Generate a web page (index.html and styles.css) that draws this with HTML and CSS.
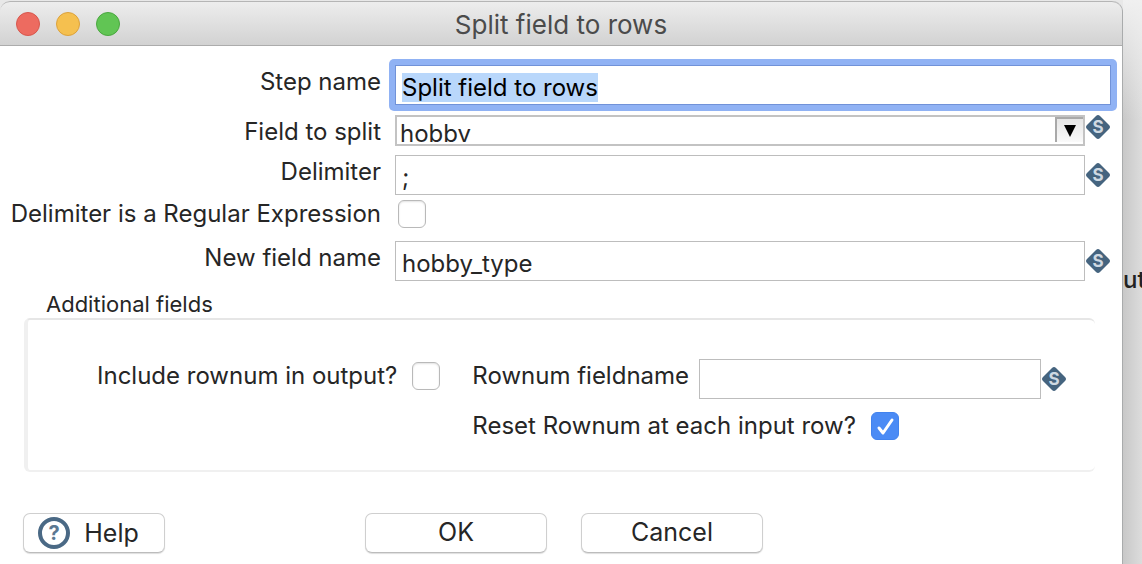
FILE: index.html
```html
<!DOCTYPE html>
<html lang="en">
<head>
<meta charset="utf-8">
<title>Split field to rows</title>
<link rel="stylesheet" href="styles.css">
</head>
<body>
<main class="window">
  <header class="titlebar">
    <div class="lights">
      <button type="button" class="light red" aria-label="Close"></button>
      <button type="button" class="light yellow" aria-label="Minimize"></button>
      <button type="button" class="light green" aria-label="Zoom"></button>
    </div>
    <h1 class="title">Split field to rows</h1>
  </header>
  <form class="form">
    <div class="row">
      <label class="label" for="step">Step name</label>
      <div class="field focused">
        <input class="text" id="step" type="text" value="Split field to rows">
      </div>
    </div>
    <div class="row combo-row">
      <label class="label" for="split">Field to split</label>
      <div class="field">
        <div class="combo">
          <div class="combo-value"><select id="split"><option>hobby</option></select></div>
          <span class="combo-arrow"><svg width="12" height="12" viewBox="0 0 12 12"><path d="M0 0H12L6 12Z"/></svg></span>
        </div>
        <svg class="variable" viewBox="0 0 24 24" aria-hidden="true">
          <path d="M10 1Q12 -1 14 1L23 10Q25 12 23 14L14 23Q12 25 10 23L1 14Q-1 12 1 10Z" fill="#45647f"/>
          <text x="12" y="18" text-anchor="middle" class="glyph-s">S</text>
        </svg>
      </div>
    </div>
    <div class="row tight">
      <label class="label" for="delimiter">Delimiter</label>
      <div class="field">
        <input class="text" id="delimiter" type="text" value=";">
        <svg class="variable" viewBox="0 0 24 24" aria-hidden="true">
          <path d="M10 1Q12 -1 14 1L23 10Q25 12 23 14L14 23Q12 25 10 23L1 14Q-1 12 1 10Z" fill="#45647f"/>
          <text x="12" y="18" text-anchor="middle" class="glyph-s">S</text>
        </svg>
      </div>
    </div>
    <div class="row">
      <label class="label" for="regex">Delimiter is a Regular Expression</label>
      <div class="field check-field"><input class="check" id="regex" type="checkbox"></div>
    </div>
    <div class="row">
      <label class="label" for="newname">New field name</label>
      <div class="field">
        <input class="text" id="newname" type="text" value="hobby_type">
        <svg class="variable" viewBox="0 0 24 24" aria-hidden="true">
          <path d="M10 1Q12 -1 14 1L23 10Q25 12 23 14L14 23Q12 25 10 23L1 14Q-1 12 1 10Z" fill="#45647f"/>
          <text x="12" y="18" text-anchor="middle" class="glyph-s">S</text>
        </svg>
      </div>
    </div>
    <fieldset class="group">
      <legend class="legend">Additional fields</legend>
      <div class="panel">
        <div class="include">
          <label class="label" for="rownum">Include rownum in output?</label>
          <input class="check" id="rownum" type="checkbox">
        </div>
        <div class="options">
          <div class="option name-option">
            <label class="label" for="rowname">Rownum fieldname</label>
            <input class="text" id="rowname" type="text">
            <svg class="variable" viewBox="0 0 24 24" aria-hidden="true">
              <path d="M10 1Q12 -1 14 1L23 10Q25 12 23 14L14 23Q12 25 10 23L1 14Q-1 12 1 10Z" fill="#45647f"/>
              <text x="12" y="18" text-anchor="middle" class="glyph-s">S</text>
            </svg>
          </div>
          <div class="option">
            <label class="label" for="reset">Reset Rownum at each input row?</label>
            <input class="check" id="reset" type="checkbox" checked>
          </div>
        </div>
      </div>
    </fieldset>
    <footer class="actions">
      <button type="button" class="button help">
        <svg class="help-icon" viewBox="0 0 32 32" aria-hidden="true">
          <circle cx="16" cy="16" r="14" fill="none" stroke="#4a6985" stroke-width="4"/>
          <text x="16" y="23" text-anchor="middle" class="glyph-q">?</text>
        </svg>
        Help
      </button>
      <button type="button" class="button">OK</button>
      <button type="button" class="button">Cancel</button>
    </footer>
  </form>
</main>
<aside class="desktop"><span class="behind">ut</span></aside>
<script src="script.js"></script>
</body>
</html>
```
FILE: styles.css
```css
* { box-sizing: border-box; }

body {
  margin: 0;
  min-height: 100vh;
  display: flex;
  overflow: hidden;
  background: #e8e8e8;
  color: #262626;
  font: 24px/34px Inter, "Liberation Sans", sans-serif;
}

input, select, button { font: inherit; color: inherit; }

.glyph-s { font: 700 17px Inter, sans-serif; fill: #cfd9e2; }
.glyph-q { font: 700 20px Inter, sans-serif; fill: #5b7892; }

.window {
  flex: 1;
  min-width: 0;
  margin-top: 1px;
  border-right: 1px solid #a9abac;
  border-top-right-radius: 11px;
  border-top-left-radius: 10px;
  background: #fff;
}

.titlebar {
  height: 45px;
  display: grid;
  grid-template-columns: 1fr auto 1fr;
  align-items: center;
  padding: 0 16px;
  border-top: 1px solid #b5b5b5;
  border-bottom: 1px solid #acacac;
  border-radius: 10px 10px 0 0;
  background: linear-gradient(#ededed, #d2d2d2);
}
.lights { display: flex; gap: 16px; }
.light { width: 24px; height: 24px; padding: 0; border: 1px solid; border-radius: 50%; }
.red { background: #ed6b60; border-color: #d7574d; }
.yellow { background: #f5c04f; border-color: #dca23c; }
.green { background: #61c554; border-color: #4aa73f; }
.title { margin: 0; padding-top: 3px; font-size: 26px; font-weight: 400; color: #4b4b4b; }

.form { padding: 19px 11px 11px 0; }

.row {
  display: grid;
  grid-template-columns: 381px 1fr;
  gap: 14px;
  margin-bottom: 10px;
}
.tight { margin-bottom: 2px; }
.row .label { text-align: right; }
.label { white-space: nowrap; }
.field { display: flex; gap: 1px; align-items: center; min-width: 0; }

.text {
  flex: 1;
  min-width: 0;
  height: 40px;
  padding: 4px 6px 0;
  border: 1px solid #bdbdbd;
  border-radius: 0;
  outline: 0;
  background: #fff;
}
.focused { margin: -6px; padding: 6px; border-radius: 5px; background: #90b2f4; }
.focused .text { border-color: #7192d8; color: #000; }
.text::selection { background: #b9d7fb; color: #000; }

.variable { width: 24px; height: 24px; flex: none; margin-right: 1px; }

.combo-row { margin-bottom: 6px; }
.combo-row .field { align-items: flex-start; }
.combo {
  flex: 1;
  display: flex;
  height: 31px;
  border: 2px solid #c3c3c3;
  background: #fff;
}
.combo-value { flex: 1; height: 25px; overflow: hidden; }
.combo-value select {
  display: block;
  width: 100%;
  height: 34px;
  padding: 0 3px;
  border: 0;
  outline: 0;
  appearance: none;
  background: transparent;
}
.combo-arrow {
  width: 28px;
  height: 25px;
  display: flex;
  align-items: center;
  justify-content: center;
  border-top: 2px solid #a9a9a9;
  border-left: 2px solid #a9a9a9;
  background: linear-gradient(#e6e6e6, #fafafa);
}

.check-field { min-height: 34px; padding-left: 3px; }
.check {
  appearance: none;
  width: 28px;
  height: 28px;
  margin: 0;
  flex: none;
  border: 1px solid #b9b9b9;
  border-radius: 6px;
  background: #fff;
  box-shadow: inset 0 1px 2px #e2e2e2;
}
.check:checked {
  border-color: #4283ee;
  box-shadow: none;
  background: #4b8bf5 url("data:image/svg+xml,%3Csvg xmlns='http://www.w3.org/2000/svg' viewBox='0 0 26 26'%3E%3Cpath d='M7 15L11 20L20 7' fill='none' stroke='white' stroke-width='3' stroke-linecap='round' stroke-linejoin='round'/%3E%3C/svg%3E") center / 100%;
}

.group { margin: 0 16px 0 24px; padding: 0; border: 0; min-width: 0; }
.legend { padding: 0 22px; font-size: 22px; line-height: 27px; }
.panel {
  display: flex;
  gap: 32px;
  min-height: 154px;
  padding: 39px 28px 0 69px;
  border: solid #f0f0f0;
  border-top-color: #e6e6e6;
  border-width: 2px 0 2px 4px;
  border-radius: 6px;
}
.include, .option { display: flex; align-items: center; gap: 15px; }
.include { height: 34px; }
.options { flex: 1; min-width: 0; }
.option { height: 34px; }
.name-option { height: 40px; gap: 1px; margin-bottom: 10px; }
.name-option .label { align-self: flex-start; margin-right: 9px; }

.actions { display: flex; gap: 34px; padding: 41px 0 0 23px; }
.button {
  width: 182px;
  height: 40px;
  display: flex;
  align-items: center;
  justify-content: center;
  padding: 0 0 2px;
  border: 1px solid #cfcfcf;
  border-bottom-color: #bcbcbc;
  border-radius: 7px;
  background: #fff;
  box-shadow: 0 1px 1px #dedede;
  font-size: 25px;
}
.help { width: 142px; gap: 14px; padding: 0 11px 0 0; margin-right: 166px; }
.help-icon { width: 32px; height: 32px; }

.desktop {
  width: 19px;
  flex: none;
  display: flex;
  align-items: flex-start;
  overflow: hidden;
  background:
    linear-gradient(#f0f0f0, rgba(240, 240, 240, 0) 120px),
    linear-gradient(to right, #c8c8c8, #dcdcdc);
}
.behind { margin-top: 263px; color: #222; font-weight: 500; }
```
FILE: script.js
```js
const step = document.getElementById("step");
step.focus();
step.select();
```
